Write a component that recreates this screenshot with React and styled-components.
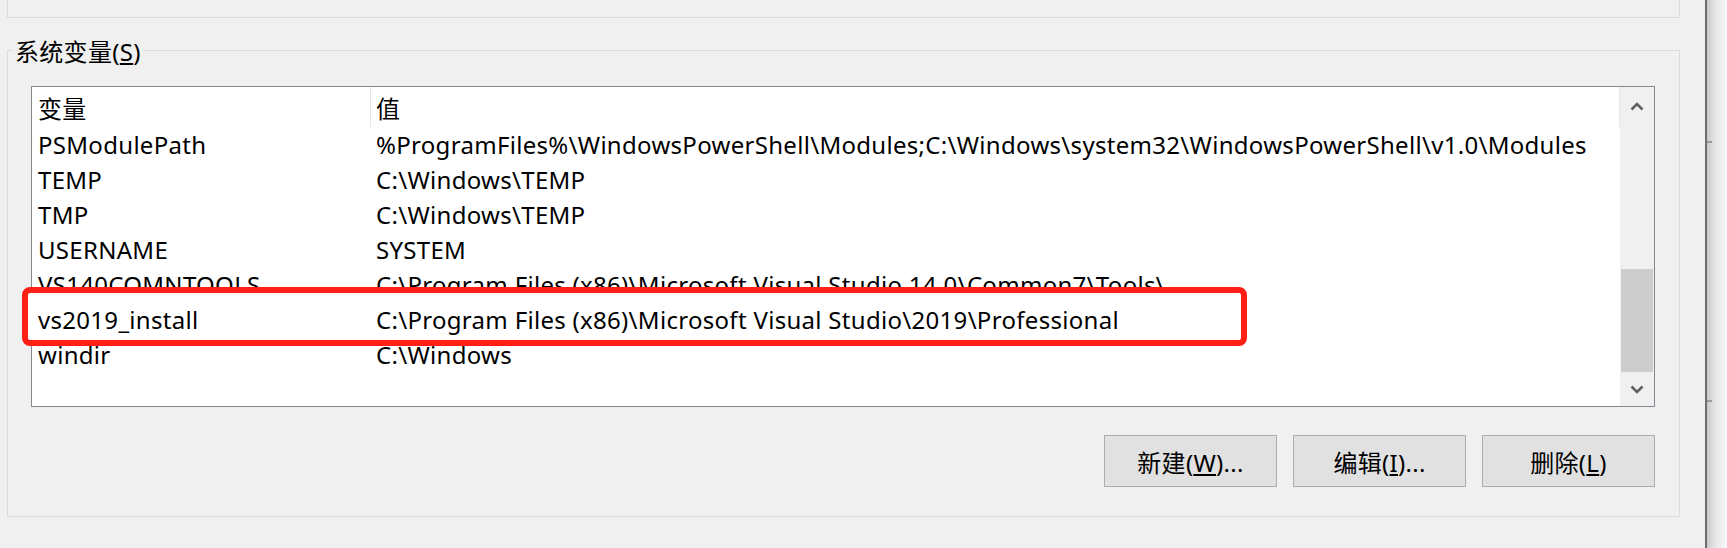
import styled, { createGlobalStyle } from 'styled-components'

const GlobalStyle = createGlobalStyle`
  html, body {
    margin: 0;
    padding: 0;
    background: #f0f0f0;
    overflow: hidden;
  }
  body {
    font-family: "Noto Sans", "Noto Sans CJK SC", sans-serif;
    color: #000;
  }
`

/* WRAPPERS */
const Page = styled.div`
  display: flex;
  width: 1727px;
  height: 548px;
`
const Dialog = styled.div`
  width: 1705px;
  padding-left: 7px;
  box-sizing: border-box;
  background: #f0f0f0;
`
const TopBox = styled.div`
  width: 1673px;
  height: 18px;
  box-sizing: border-box;
  border: 1px solid #dcdcdc;
  border-top: none;
`
const Group = styled.fieldset`
  width: 1673px;
  box-sizing: border-box;
  margin: 17px 0 0 0;
  padding: 0;
  border: 1px solid #dcdcdc;
  min-width: 0;
`
const Legend = styled.legend`
  margin-left: 5px;
  padding: 4px 2px 0 2px;
  font-size: 24px;
  letter-spacing: 0.3px;
  line-height: 26px;
`
const GroupBody = styled.div`
  padding: 21px 24px 29px 23px;
`
const Edge = styled.div`
  position: relative;
  width: 2px;
  background: #6e6e6e;

  &::before, &::after {
    content: '';
    position: absolute;
    left: 2px;
    width: 5px;
    height: 2px;
    background: #9a9a9a;
  }
  &::before { top: 141px; }
  &::after { top: 400px; }
`
const Shadow = styled.div`
  flex: 1;
  background: linear-gradient(to right, #c9c9c9, #e6e6e6 40%, #f7f7f7);
`

/* LIST VIEW */
const ListView = styled.div`
  display: flex;
  height: 321px;
  box-sizing: border-box;
  border: 1px solid #828790;
  background: #fff;
`
const ListContent = styled.div`
  flex: 1;
  display: flex;
  flex-direction: column;
`
const Row = styled.div`
  position: relative;
  display: grid;
  grid-template-columns: 338px 1fr;
  height: ${p => (p.$header ? 40 : 35)}px;
  align-items: center;
  font-size: 24px;
  letter-spacing: 0.3px;
  white-space: nowrap;

  ${p => p.$marked && `
    z-index: 1;
    &::before {
      content: '';
      position: absolute;
      top: -15px;
      bottom: -9px;
      left: -10px;
      width: 1225px;
      box-sizing: border-box;
      background: #fff;
      border: 6px solid #ff1f14;
      border-radius: 8px;
    }
  `}
`
const Cell = styled.div`
  position: relative;
  height: 100%;
  display: flex;
  align-items: center;
  border-left: ${p => (p.$divider ? '1px solid #e5e5e5' : 'none')};
  padding-left: ${p => (p.$divider ? 5 : 6)}px;
`
const HeaderRow = styled(Row)`
  border-right: 1px solid #e5e5e5;
`

/* SCROLLBAR */
const ScrollBar = styled.div`
  width: 34px;
  display: flex;
  flex-direction: column;
  background: #f0f0f0;
`
const ArrowButton = styled.div`
  height: ${p => p.$h}px;
  display: flex;
  align-items: center;
  justify-content: center;
  color: #606060;
`
const Track = styled.div`
  flex: 1;
  display: flex;
  flex-direction: column;
  justify-content: flex-end;
`
const Thumb = styled.div`
  height: 103px;
  margin: 0 1px;
  background: #cdcdcd;
`

/* BUTTONS */
const ButtonRow = styled.div`
  display: flex;
  justify-content: flex-end;
  gap: 16px;
  margin-top: 28px;
`
const Button = styled.button`
  width: 173px;
  height: 52px;
  box-sizing: border-box;
  background: #e1e1e1;
  border: 1px solid #adadad;
  font-family: inherit;
  font-size: 24px;
  letter-spacing: 0.3px;
  color: #000;
  padding: 0;
`

const Chevron = ({up}) => (
  <svg width="14" height="9" viewBox="0 0 14 9">
    <path
      d={up ? 'M1.5 7.5 L7 2 L12.5 7.5' : 'M1.5 1.5 L7 7 L12.5 1.5'}
      fill="none"
      stroke="currentColor"
      strokeWidth="2.6"
    />
  </svg>
)

const vars = [
  ['PSModulePath', '%ProgramFiles%\\WindowsPowerShell\\Modules;C:\\Windows\\system32\\WindowsPowerShell\\v1.0\\Modules'],
  ['TEMP', 'C:\\Windows\\TEMP'],
  ['TMP', 'C:\\Windows\\TEMP'],
  ['USERNAME', 'SYSTEM'],
  ['VS140COMNTOOLS', 'C:\\Program Files (x86)\\Microsoft Visual Studio 14.0\\Common7\\Tools\\'],
  ['vs2019_install', 'C:\\Program Files (x86)\\Microsoft Visual Studio\\2019\\Professional'],
  ['windir', 'C:\\Windows'],
]

const App = () => {
  return (
    <Page>
      <GlobalStyle />
      <Dialog>
        <TopBox />
        <Group>
          <Legend>系统变量(<u>S</u>)</Legend>
          <GroupBody>
            <ListView>
              <ListContent>
                <HeaderRow $header>
                  <Cell>变量</Cell>
                  <Cell $divider>值</Cell>
                </HeaderRow>
                {vars.map(([name, value]) => (
                  <Row key={name} $marked={name === 'vs2019_install'}>
                    <Cell>{name}</Cell>
                    <Cell>{value}</Cell>
                  </Row>
                ))}
              </ListContent>
              <ScrollBar>
                <ArrowButton $h={38}><Chevron up /></ArrowButton>
                <Track><Thumb /></Track>
                <ArrowButton $h={34}><Chevron /></ArrowButton>
              </ScrollBar>
            </ListView>
            <ButtonRow>
              <Button>新建(<u>W</u>)...</Button>
              <Button>编辑(<u>I</u>)...</Button>
              <Button>删除(<u>L</u>)</Button>
            </ButtonRow>
          </GroupBody>
        </Group>
      </Dialog>
      <Edge />
      <Shadow />
    </Page>
  )
}

export default App
